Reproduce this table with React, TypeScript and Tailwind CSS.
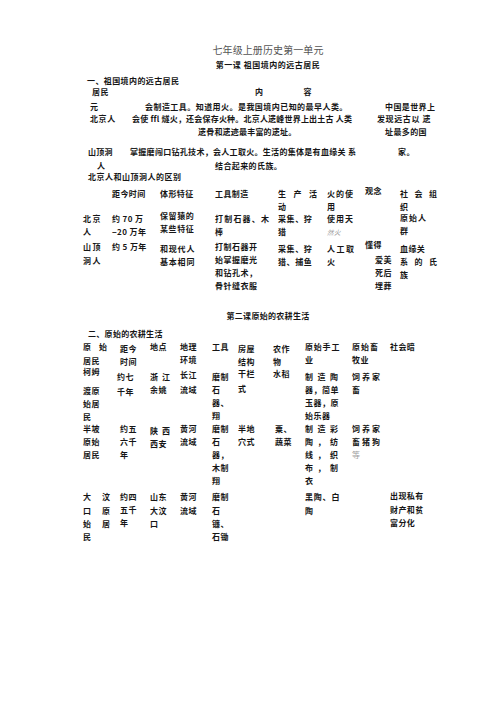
import React from "react";

type CellProps = { children?: React.ReactNode; className?: string };

// one cell of a scanned table: a stack of single lines
function Cell({ children, className = "" }: CellProps) {
  return <div className={"whitespace-nowrap " + className}>{children}</div>;
}

function Ln({ children, className = "" }: CellProps) {
  return <div className={"whitespace-nowrap " + className}>{children}</div>;
}

export default function App() {
  return (
    <div className="min-h-[713px] w-[504px] bg-white pt-[43px] font-['Noto_Sans_CJK_SC',sans-serif] text-[8px] leading-[13px] font-bold tracking-[0.4px] text-[#161616]">
      {/* page titles */}
      <div className="h-[14px] pl-[32px] text-center text-[10px] leading-[14px] font-normal tracking-[0.1px] text-[#555]">
        七年级上册历史第一单元
      </div>
      <div className="h-[17px] pl-[32px] pt-[1px] text-center tracking-[0.5px]">第一课 祖国境内的远古居民</div>
      <div className="h-[11px] pl-[87px] leading-[13px]">一、祖国境内的远古居民</div>

      {/* table 1 */}
      <div className="pl-[88px]">
        <div className="grid h-[15px] grid-cols-[42px_245px_70px]">
          <Cell className="pl-[4px]">居民</Cell>
          <Cell className="col-span-2 flex">
            <span className="ml-[125px]">内</span>
            <span className="ml-[40px]">容</span>
          </Cell>
        </div>
        <div className="grid h-[12px] grid-cols-[42px_245px_70px]">
          <Cell className="pl-[2px]">元</Cell>
          <Cell className="pl-[15px] tracking-[0.45px]">会制造工具。知道用火。是我国境内已知的最早人类。</Cell>
          <Cell className="pl-[10px]">中国是世界上</Cell>
        </div>
        <div className="grid h-[13px] grid-cols-[42px_245px_70px]">
          <Cell className="pl-[2px] tracking-[0.6px]">北京人</Cell>
          <Cell className="pl-[2px] tracking-[0.2px]">会使 ffl 燧火，还会保存火种。北京人遗峰世界上出土古 人类</Cell>
          <Cell className="pl-[2px] tracking-[0.6px]">发现远古以 遗</Cell>
        </div>
        <div className="grid h-[20px] grid-cols-[42px_245px_70px]">
          <Cell />
          <Cell className="pl-[68px] tracking-[0.2px]">遗骨和遗迹最丰富的遗址。</Cell>
          <Cell className="pl-[10px]">址最多的国</Cell>
        </div>
        <div className="grid h-[14px] grid-cols-[42px_245px_70px]">
          <Cell className="tracking-[0.2px]">山顶洞</Cell>
          <Cell className="tracking-[0.3px]">掌握磨闯口钻孔技术，会人工取火。生活的集体是有血缘关 系</Cell>
          <Cell className="pl-[23px]">家。</Cell>
        </div>
        <div className="grid h-[11px] grid-cols-[42px_245px_70px]">
          <Cell className="pl-[9px]">人</Cell>
          <Cell className="pl-[85px]">结合起来的氏族。</Cell>
          <Cell />
        </div>
        <div className="h-[14px] tracking-[0.5px]">北京人和山顶洞人的区别</div>
      </div>

      {/* table 2 */}
      <div className="pl-[83px]">
        <div className="grid h-[25px] grid-cols-[29px_48px_55px_63px_49px_38px_35px_45px]">
          <Cell />
          <Cell className="pt-[3px]">距今时间</Cell>
          <Cell className="pt-[3px]">体形特征</Cell>
          <Cell className="pt-[3px]">工具制造</Cell>
          <Cell className="pt-[3px]">
            <Ln className="tracking-[7.5px]">生产活</Ln>
            <Ln>动</Ln>
          </Cell>
          <Cell className="pt-[3px]">
            <Ln className="tracking-[1px]">火的使</Ln>
            <Ln>用</Ln>
          </Cell>
          <Cell className="pt-[0px]">观念</Cell>
          <Cell className="pt-[3px]">
            <Ln className="tracking-[6.5px]">社会组</Ln>
            <Ln>织</Ln>
          </Cell>
        </div>

        <div className="grid h-[29px] grid-cols-[29px_48px_55px_63px_49px_38px_35px_45px]">
          <Cell className="pt-[3px]">
            <Ln className="tracking-[1.5px]">北京</Ln>
            <Ln>人</Ln>
          </Cell>
          <Cell className="pt-[3px]">
            <Ln>约 70 万</Ln>
            <Ln>−20 万年</Ln>
          </Cell>
          <Cell>
            <Ln className="tracking-[0.6px]">保留猿的</Ln>
            <Ln className="tracking-[0.6px]">某些特征</Ln>
          </Cell>
          <Cell className="pt-[3px]">
            <Ln className="tracking-[1.2px]">打制石器、木</Ln>
            <Ln>棒</Ln>
          </Cell>
          <Cell className="pt-[3px]">
            <Ln className="tracking-[0.6px]">采集、狩</Ln>
            <Ln>猎</Ln>
          </Cell>
          <Cell className="pt-[3px]">
            <Ln className="tracking-[1px]">使用天</Ln>
            <Ln className="pt-[1px] text-[6.5px] font-normal italic text-[#9a9a9a]">然火</Ln>
          </Cell>
          <Cell />
          <Cell className="pt-[2px]">
            <Ln className="tracking-[1px]">原始人</Ln>
            <Ln>群</Ln>
          </Cell>
        </div>

        <div className="grid h-[71px] grid-cols-[29px_48px_55px_63px_49px_38px_35px_45px]">
          <Cell className="pt-[2px]">
            <Ln className="tracking-[1.5px]">山顶</Ln>
            <Ln className="pt-[1px] tracking-[1.5px]">洞人</Ln>
          </Cell>
          <Cell className="pt-[2px]">约 5 万年</Cell>
          <Cell className="pt-[4px]">
            <Ln className="tracking-[0.8px]">和现代人</Ln>
            <Ln className="tracking-[0.8px]">基本相同</Ln>
          </Cell>
          <Cell className="pt-[2px]">
            <Ln className="tracking-[0.5px]">打制石器开</Ln>
            <Ln className="tracking-[0.5px]">始掌握磨光</Ln>
            <Ln className="tracking-[0.5px]">和钻孔术，</Ln>
            <Ln className="tracking-[0.5px]">骨针缝衣服</Ln>
          </Cell>
          <Cell className="pt-[4px]">
            <Ln className="tracking-[0.6px]">采集、狩</Ln>
            <Ln className="tracking-[0.6px]">猎、捕鱼</Ln>
          </Cell>
          <Cell className="pt-[4px]">
            <Ln className="tracking-[1.5px]">人工取</Ln>
            <Ln>火</Ln>
          </Cell>
          <Cell>
            <Ln className="tracking-[0.5px]">懂得</Ln>
            <Ln className="pl-[10px] pt-[2px]">爱美</Ln>
            <Ln className="pl-[10px]">死后</Ln>
            <Ln className="pl-[10px]">埋葬</Ln>
          </Cell>
          <Cell className="pt-[4px]">
            <Ln>血缘关</Ln>
            <Ln className="tracking-[6.5px]">系的氏</Ln>
            <Ln>族</Ln>
          </Cell>
        </div>
      </div>

      {/* lesson 2 */}
      <div className="h-[18px] pl-[32px] text-center tracking-[0.3px]">第二课原始的农耕生活</div>
      <div className="h-[13px] pl-[88px] tracking-[0.3px]">二、原始的农耕生活</div>

      {/* table 3 */}
      <div className="pl-[83px]">
        <div className="grid h-[25px] grid-cols-[34px_33px_30px_32px_26px_35px_32px_47px_38px_55px]">
          <Cell>
            <Ln className="tracking-[8px]">原始</Ln>
            <Ln className="pt-[1px]">居民</Ln>
          </Cell>
          <Cell className="pl-[3px] pt-[2px]">
            <Ln>距今</Ln>
            <Ln>时间</Ln>
          </Cell>
          <Cell>地点</Cell>
          <Cell>
            <Ln>地理</Ln>
            <Ln>环境</Ln>
          </Cell>
          <Cell>工具</Cell>
          <Cell className="pt-[2px]">
            <Ln>房屋</Ln>
            <Ln>结构</Ln>
          </Cell>
          <Cell className="pt-[2px]">
            <Ln>农作</Ln>
            <Ln>物</Ln>
          </Cell>
          <Cell>
            <Ln className="tracking-[0.8px]">原始手工</Ln>
            <Ln>业</Ln>
          </Cell>
          <Cell>
            <Ln className="tracking-[1px]">原始畜</Ln>
            <Ln>牧业</Ln>
          </Cell>
          <Cell>社会暗</Cell>
        </div>

        {/* 河姆渡 */}
        <div className="grid h-[57px] grid-cols-[34px_33px_30px_32px_26px_35px_32px_47px_38px_55px]">
          <Cell>
            <Ln>柯姆</Ln>
            <Ln className="pt-[6px]">渡原</Ln>
            <Ln>始居</Ln>
            <Ln>民</Ln>
          </Cell>
          <Cell className="pt-[5px]">
            <Ln>约七</Ln>
            <Ln className="pt-[2px]">千年</Ln>
          </Cell>
          <Cell className="pt-[5px]">
            <Ln className="tracking-[4px]">浙江</Ln>
            <Ln>余姚</Ln>
          </Cell>
          <Cell className="pt-[3px]">
            <Ln>长江</Ln>
            <Ln className="pt-[2px]">流域</Ln>
          </Cell>
          <Cell className="pt-[5px]">
            <Ln>磨制</Ln>
            <Ln>石</Ln>
            <Ln>器、</Ln>
            <Ln>翔</Ln>
          </Cell>
          <Cell className="pt-[2px]">
            <Ln>干栏</Ln>
            <Ln className="pt-[2px]">式</Ln>
          </Cell>
          <Cell className="pt-[2px]">水稻</Cell>
          <Cell className="pt-[5px]">
            <Ln className="tracking-[4.5px]">制造陶</Ln>
            <Ln className="tracking-[0.5px]">器，简单</Ln>
            <Ln className="tracking-[0.5px]">玉器，原</Ln>
            <Ln className="tracking-[0.5px]">始乐器</Ln>
          </Cell>
          <Cell className="pt-[5px]">
            <Ln className="tracking-[2px]">饲养家</Ln>
            <Ln>畜</Ln>
          </Cell>
          <Cell />
        </div>

        {/* 半坡 */}
        <div className="grid h-[68px] grid-cols-[34px_33px_30px_32px_26px_35px_32px_47px_38px_55px]">
          <Cell>
            <Ln>半坡</Ln>
            <Ln>原始</Ln>
            <Ln>居民</Ln>
          </Cell>
          <Cell className="pl-[3px]">
            <Ln>约五</Ln>
            <Ln>六千</Ln>
            <Ln>年</Ln>
          </Cell>
          <Cell className="pt-[2px]">
            <Ln className="tracking-[4px]">陕西</Ln>
            <Ln>西安</Ln>
          </Cell>
          <Cell>
            <Ln>黄河</Ln>
            <Ln>流域</Ln>
          </Cell>
          <Cell>
            <Ln>磨制</Ln>
            <Ln>石</Ln>
            <Ln>器，</Ln>
            <Ln>木制</Ln>
            <Ln>翔</Ln>
          </Cell>
          <Cell>
            <Ln>半地</Ln>
            <Ln>穴式</Ln>
          </Cell>
          <Cell className="pl-[2px]">
            <Ln>粟、</Ln>
            <Ln>蔬菜</Ln>
          </Cell>
          <Cell>
            <Ln className="tracking-[4.5px]">制造彩</Ln>
            <Ln className="tracking-[4.5px]">陶，纺</Ln>
            <Ln className="tracking-[4.5px]">线，织</Ln>
            <Ln className="tracking-[4.5px]">布，制</Ln>
            <Ln>衣</Ln>
          </Cell>
          <Cell>
            <Ln className="tracking-[2px]">饲养家</Ln>
            <Ln className="tracking-[2px]">畜猪狗</Ln>
            <Ln className="font-normal text-[#a0a0a0]">等</Ln>
          </Cell>
          <Cell />
        </div>

        {/* 大汶口 */}
        <div className="grid h-[60px] grid-cols-[34px_33px_30px_32px_26px_35px_32px_47px_38px_55px]">
          <Cell>
            <Ln className="tracking-[11px]">大汶</Ln>
            <Ln className="pt-[1px] tracking-[11px]">口原</Ln>
            <Ln className="tracking-[11px]">始居</Ln>
            <Ln>民</Ln>
          </Cell>
          <Cell className="pl-[3px]">
            <Ln>约四</Ln>
            <Ln>五千</Ln>
            <Ln>年</Ln>
          </Cell>
          <Cell>
            <Ln>山东</Ln>
            <Ln className="pt-[1px]">大汶</Ln>
            <Ln>口</Ln>
          </Cell>
          <Cell>
            <Ln>黄河</Ln>
            <Ln className="pt-[1px]">流域</Ln>
          </Cell>
          <Cell>
            <Ln>磨制</Ln>
            <Ln className="pt-[1px]">石</Ln>
            <Ln>镰、</Ln>
            <Ln>石锄</Ln>
          </Cell>
          <Cell />
          <Cell />
          <Cell>
            <Ln className="tracking-[0.8px]">黑陶、白</Ln>
            <Ln className="pt-[1px]">陶</Ln>
          </Cell>
          <Cell />
          <Cell className="-mt-[1px]">
            <Ln>出现私有</Ln>
            <Ln className="pt-[1px]">财产和贫</Ln>
            <Ln>富分化</Ln>
          </Cell>
        </div>
      </div>
    </div>
  );
}
